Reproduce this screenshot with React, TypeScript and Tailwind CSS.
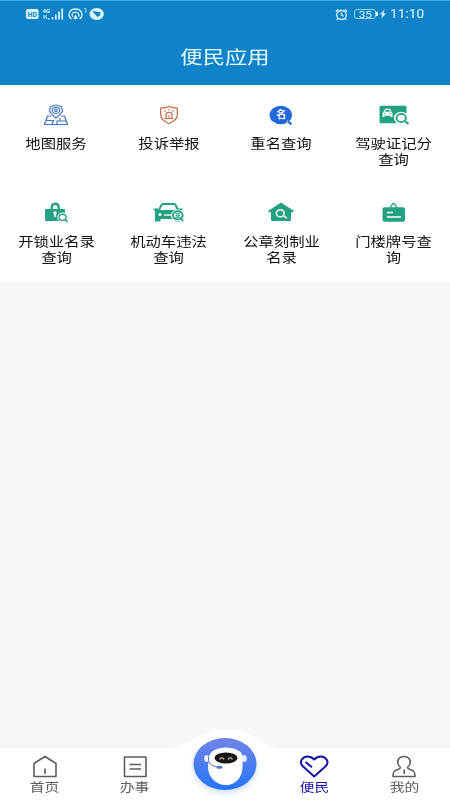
import type { ReactNode } from "react";

const green = "#22a183";

function MapIcon() {
  return (
    <svg width="26" height="24" viewBox="0 0 26 24" fill="none" stroke="#3f74c4" strokeWidth="1.2">
      <path d="M8 13H4.500L1.500 21.500h23L21.500 13H18M2.500 17.500h8l-1.500 4M14 21.500V18h9.500M17 15v3" />
      <path d="M13 15C9.500 12 6.500 10 6.500 7.300a6.500 5.300 0 0 1 13 0c0 2.700-3 4.700-6.500 7.700Z" fill="#fff" />
      <ellipse cx="13" cy="7.300" rx="3.800" ry="3.200" />
      <circle cx="13" cy="7.300" r="1.300" />
    </svg>
  );
}

function ShieldIcon() {
  return (
    <svg width="26" height="24" viewBox="0 0 26 24" fill="none" stroke="#c4694a" strokeWidth="1.2">
      <path d="M13 3.500c2.500 1 5.300 1.500 8.300 1.600v7c0 4-3.500 6.500-8.300 8.700-4.800-2.200-8.300-4.700-8.300-8.700v-7C7.700 5 10.500 4.500 13 3.500Z" />
      <path d="M10 15v-3.200c0-3.400 6-3.400 6 0V15M8.500 15.500h9M13 6v1.500M8.700 7.500l1 1.200M17.300 7.500l-1 1.200M13 12.500v2" />
    </svg>
  );
}

function NameIcon() {
  return (
    <span className="relative block h-6 w-[26px]">
      <svg width="26" height="24" viewBox="0 0 26 24">
        <ellipse cx="12.800" cy="12" rx="11.200" ry="9.300" fill="#2467dc" />
        <path d="m19 17.500 4.500 4" stroke="#2467dc" strokeWidth="2.300" />
        <path d="m18.500 19 2-1.800" stroke="#fff" strokeWidth=".9" />
      </svg>
      <span className="absolute inset-x-0 top-[6px] text-center text-[10px] leading-[12px] font-bold text-white">名</span>
    </span>
  );
}

function LicenseIcon() {
  return (
    <svg width="32" height="24" viewBox="0 0 32 24">
      <rect x="1.500" y="2.700" width="27" height="17.500" rx="1.500" fill={green} />
      <path d="m5.500 9 1.500-3.300h5L13.500 9l1 1v4h-2v-1.200h-6V14h-2v-4Z" fill="#fff" />
      <path d="M7 8.700h5l-.8-1.800H7.800ZM6 10.300h1.500v1H6ZM11.500 10.300H13v1h-1.500Z" fill={green} />
      <ellipse cx="23.200" cy="15" rx="7.300" ry="6.300" fill="#fff" />
      <ellipse cx="23.200" cy="15" rx="4.700" ry="4.100" fill="#fff" stroke={green} strokeWidth="1.900" />
      <path d="m27 18 3.500 3" stroke={green} strokeWidth="2.200" />
    </svg>
  );
}

function LockIcon() {
  return (
    <svg width="26" height="24" viewBox="0 0 26 24">
      <path d="M8.700 10V6.500c0-5 7-5 7 0V10" fill="none" stroke={green} strokeWidth="2.400" />
      <rect x="2" y="8" width="20" height="12" rx="1" fill={green} />
      <circle cx="12" cy="12" r="1.700" fill="#fff" />
      <path d="M12 12v4" stroke="#fff" strokeWidth="1.600" />
      <ellipse cx="19.500" cy="16.300" rx="5.300" ry="4.800" fill="#fff" />
      <ellipse cx="19.500" cy="16.300" rx="3.500" ry="3" fill="none" stroke={green} strokeWidth="1.400" />
      <path d="m22 18.500 2.500 2.500" stroke={green} strokeWidth="1.700" />
    </svg>
  );
}

function CarIcon() {
  return (
    <svg width="32" height="24" viewBox="0 0 32 24">
      <path d="m5.500 10 3-6q.4-1 1.500-1h11q1.100 0 1.500 1l3 6" fill="none" stroke={green} strokeWidth="1.900" />
      <path d="M.5 7.500h4.500V9h20V7.500h4.500V9l-2 .8V20.500H22V18H7.500v2.500H2V9.800L.5 9Z" fill={green} />
      <circle cx="7" cy="13.500" r="1.600" fill="#fff" />
      <path d="M11 14h8" stroke="#fff" strokeWidth="1.300" />
      <ellipse cx="24.800" cy="14.300" rx="6.800" ry="5.900" fill="#fff" />
      <ellipse cx="24.800" cy="14.300" rx="4.900" ry="4.100" fill="#fff" stroke={green} strokeWidth="1.900" />
      <path d="M22.500 12.700H24m1.500 0H27M22.500 14.500H24m1.500 0H27M22 16.300h5.500M24 12v4m1.700-4v4" stroke={green} strokeWidth=".9" />
      <path d="m28 17.500 2.300 2.800" stroke={green} strokeWidth="1.500" />
    </svg>
  );
}

function HouseSearchIcon() {
  return (
    <svg width="28" height="24" viewBox="0 0 28 24">
      <path d="M14 1.500 27 10l-1 1.200h-2V19q0 1-1 1H5q-1 0-1-1v-7.800H2L1 10Z" fill={green} />
      <ellipse cx="13.300" cy="12.200" rx="3.900" ry="3.500" fill="none" stroke="#fff" strokeWidth="1.400" />
      <path d="m16.300 14.500 3.500 2.900" stroke="#fff" strokeWidth="1.500" />
    </svg>
  );
}

function PlateIcon() {
  return (
    <svg width="26" height="24" viewBox="0 0 26 24">
      <path d="m9 7 2.500-4q1-1 2 0L16 7" fill="none" stroke={green} strokeWidth="1.400" />
      <rect x="1.500" y="6.300" width="22.500" height="14.500" rx="2" fill={green} />
      <path d="M6 11.500h6M6 16h14" stroke="#fff" strokeWidth="1.300" />
    </svg>
  );
}

const services: { lines: string[]; icon: ReactNode }[] = [
  { lines: ["地图服务"], icon: <MapIcon /> },
  { lines: ["投诉举报"], icon: <ShieldIcon /> },
  { lines: ["重名查询"], icon: <NameIcon /> },
  { lines: ["驾驶证记分", "查询"], icon: <LicenseIcon /> },
  { lines: ["开锁业名录", "查询"], icon: <LockIcon /> },
  { lines: ["机动车违法", "查询"], icon: <CarIcon /> },
  { lines: ["公章刻制业", "名录"], icon: <HouseSearchIcon /> },
  { lines: ["门楼牌号查", "询"], icon: <PlateIcon /> },
];

function StatusBar() {
  return (
    <div className="flex h-[26px] items-center justify-between pr-[26px] pl-[26px] text-[#d9f6fb]">
      <svg width="79" height="14" viewBox="0 0 79 14" fill="none" stroke="currentColor">
        <rect x="0" y="2" width="12.500" height="10" rx="1.800" fill="currentColor" stroke="none" />
        <text x="6.200" y="9.600" textAnchor="middle" fontSize="7" fontWeight="700" fill="#1083c8" stroke="none">
          HD
        </text>
        <text x="16.500" y="6" fontSize="6" fontWeight="700" fill="currentColor" stroke="none">
          4G
        </text>
        <path d="M18 8v4m2.500-4-1 2 1.500 2" strokeWidth="1" />
        <path d="M22.800 11v1.500" strokeWidth="1.300" />
        <path d="M26.500 12.500V10m3.300 2.500V7.500m3.200 5V4.500m3.200 8V1.500" strokeWidth="1.700" />
        <path d="M45.500 12c-4.500-3-2.500-10 4-10s8.500 7 4 10M47 9.800c-2-2-.5-4.700 2.500-4.700s4.500 2.700 2.500 4.700" strokeWidth="1.300" />
        <path d="m49.500 7.300 2.200 4.700h-4.400Z" fill="currentColor" stroke="none" />
        <text x="57.500" y="6" fontSize="7" fill="currentColor" stroke="none">
          1
        </text>
        <ellipse cx="70.700" cy="7" rx="7.200" ry="5.900" fill="currentColor" stroke="none" />
        <path d="m66 4 8.500 1.200-.5 3.300-2.500 1.500Z" fill="#1083c8" stroke="none" />
      </svg>
      <div className="flex items-center">
        <svg width="13" height="13" viewBox="0 0 13 13" fill="none" stroke="currentColor" strokeWidth="1.300">
          <ellipse cx="6.500" cy="7" rx="4.800" ry="4.500" />
          <path d="M6.500 4.500V7l2 1.200M.8 3.500l2.500-2M12.200 3.500l-2.500-2M3 10.500l-1.300 1.300m8.300-1.300 1.300 1.300" />
        </svg>
        <div className="ml-[6px] flex h-[10px] w-[22px] items-center justify-center rounded-[3px] border border-[#8fd0ec]">
          <span className="block scale-x-125 text-[9.500px] leading-[9px]">35</span>
        </div>
        <span className="h-1 w-[2px] bg-current" />
        <svg width="6" height="10" viewBox="0 0 7 11" className="ml-[2px]">
          <path d="M5.500 0 0 6h2.800L1.500 11 7 4.500H4Z" fill="currentColor" />
        </svg>
        <span className="ml-[4px] w-[34px] text-[12px] leading-[14px]">
          <span className="block w-[30px] origin-left scale-x-114">11:10</span>
        </span>
      </div>
    </div>
  );
}

function Robot() {
  return (
    <svg width="64" height="56" viewBox="0 0 64 56" className="block drop-shadow-[0_3px_3px_#cfdcef]">
      <defs>
        <linearGradient id="ball" x1="0" y1="0" x2="0" y2="1">
          <stop offset="0" stopColor="#7184e6" />
          <stop offset="1" stopColor="#2475f8" />
        </linearGradient>
      </defs>
      <ellipse cx="32" cy="27" rx="31.500" ry="26" fill="url(#ball)" />
      <ellipse cx="13.500" cy="21.500" rx="2.300" ry="3.500" fill="#e9efff" />
      <ellipse cx="51.500" cy="21.500" rx="2.300" ry="3.500" fill="#e9efff" />
      <path d="M16 21c0-14 34-14 34 0 0 3-.7 4.500-.5 9 0 10.500-7 18-16.500 18s-18-7.500-18-18c0-4 1-6 1-9Z" fill="#fff" />
      <ellipse cx="33" cy="21" rx="11.500" ry="5.600" fill="#171719" />
      <path d="M26.500 22.500q2.300-3.500 4.500 0m4 0q2.300-3.500 4.500 0" fill="none" stroke="#c49b68" strokeWidth="1.600" />
      <path d="M15.500 20v3.500q1.500 5.500 8.500 6.500" fill="none" stroke="#5574cc" strokeWidth="1" />
      <ellipse cx="26.500" cy="30.300" rx="3" ry="1.500" fill="#5574cc" />
    </svg>
  );
}

const tabs: { label: string; icon: ReactNode; active?: boolean }[] = [
  { label: "首页", icon: <path d="M4 9.500 15 2.500l11 7V22.500H4ZM15 14.500v5.500" /> },
  { label: "办事", icon: <path d="M4.500 3H26v19.500H4.500ZM9.500 10.500h11.500m-11.500 4.500h11.500" /> },
  {
    label: "便民",
    icon: <path d="M14.200 22.500 2.800 12.300C-1.500 8 2.500 2.500 7.500 2.500c3.200 0 5 1.200 6.700 3 1.700-1.800 3.500-3 6.700-3 5 0 9 5.500 4.700 9.800ZM5.500 8l6.500 5.200" />,
    active: true,
  },
  {
    label: "我的",
    icon: <path d="M10.500 13.500C5 8.500 8.500 2.500 14 2.500s9 6 3.500 11c0 1.500 1 1.500 3.500 2.200 3 .8 4 2.300 4 6.800H3c0-4.500 1-6 4-6.800 2.500-.7 3.500-.7 3.500-2.200M14.200 15.500v4.500" />,
  },
];

function Tab({ label, icon, active }: { label: string; icon: ReactNode; active?: boolean }) {
  return (
    <div className={`flex w-[90px] flex-col items-center pt-[6px] ${active ? "text-[#1712a4]" : "text-[#5c5c5e]"}`}>
      <svg
        width="30"
        height="24"
        viewBox="0 0 30 24"
        fill="none"
        stroke="currentColor"
        strokeWidth={active ? 2 : 1.6}
        strokeLinejoin="round"
        className="overflow-visible"
      >
        {icon}
      </svg>
      <span className="mt-[2px] block scale-x-118 text-[12.500px] leading-4">{label}</span>
    </div>
  );
}

export default function App() {
  return (
    <div className="flex h-[800px] w-[450px] flex-col overflow-hidden bg-[#f7f7f7] font-['Roboto','Noto_Sans_CJK_SC',sans-serif]">
      <header className="h-[85px] border-t border-[#42a9df] bg-[#1083c8]">
        <StatusBar />
        <h1 className="mt-[18px] scale-x-124 text-center text-[18px] leading-[26px] text-[#e4fbff]">便民应用</h1>
      </header>
      <main className="grid h-[197px] grid-cols-4 grid-rows-[98px_99px] bg-white pt-px">
        {services.map(({ lines, icon }) => (
          <div key={lines[0]} className="flex flex-col items-center pt-[17px]">
            {icon}
            <p className="mt-[9px] scale-x-118 text-center text-[13px] leading-4 text-[#111]">
              {lines.map((line) => (
                <span key={line} className="block whitespace-nowrap">
                  {line}
                </span>
              ))}
            </p>
          </div>
        ))}
      </main>
      <div className="flex-1" />
      <nav className="relative flex h-[52px] bg-white shadow-[0_-1px_3px_#eeeeee]">
        <svg width="116" height="72" viewBox="0 0 116 72" className="absolute -top-5 left-[167px]">
          <path d="M0 20C26 20 28 1 58 1s32 19 58 19v52H0Z" fill="#fff" />
        </svg>
        <Tab {...tabs[0]} />
        <Tab {...tabs[1]} />
        <div className="relative -mt-[11px] flex w-[90px] justify-center">
          <Robot />
        </div>
        <Tab {...tabs[2]} />
        <Tab {...tabs[3]} />
      </nav>
    </div>
  );
}
